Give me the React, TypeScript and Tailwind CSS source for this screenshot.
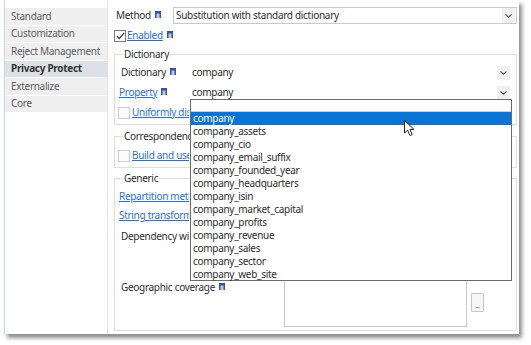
import React from "react";

const Info = () => (
  <svg width="6" height="7" viewBox="0 0 6 7" className="shrink-0 -mt-[3px]">
    <rect x="0" y="0" width="6" height="7" fill="#34559a" />
    <rect x="1.5" y="2.5" width="3" height="4.5" fill="#b9c8e6" />
  </svg>
);

const Chevron = () => (
  <svg width="7" height="4" viewBox="0 0 7 4">
    <path d="M0.5 0.5 L3.5 3.2 L6.5 0.5" fill="none" stroke="#555" strokeWidth="1.1" />
  </svg>
);

const Checkbox = ({ checked }: { checked?: boolean }) =>
  checked ? (
    <span className="flex h-[12px] w-[12px] shrink-0 items-center justify-center border border-[#7b7b7b] bg-white">
      <svg width="9" height="8" viewBox="0 0 9 8">
        <path d="M0.8 4 L3.3 6.5 L8.3 0.8" fill="none" stroke="#3a3a3a" strokeWidth="1.2" />
      </svg>
    </span>
  ) : (
    <span className="h-[12px] w-[12px] shrink-0 border border-[#cdcdcd] bg-[#fbfbfb]" />
  );

const Link = ({ children }: { children: React.ReactNode }) => (
  <span className="whitespace-nowrap text-[#2f6fc9] underline decoration-[#2f6fc9]">{children}</span>
);

const navItems = ["Standard", "Customization", "Reject Management", "Privacy Protect", "Externalize", "Core"];

const options = [
  "company",
  "company_assets",
  "company_cio",
  "company_email_suffix",
  "company_founded_year",
  "company_headquarters",
  "company_isin",
  "company_market_capital",
  "company_profits",
  "company_revenue",
  "company_sales",
  "company_sector",
  "company_web_site",
];

export default function App() {
  return (
    <div className="h-[345px] w-[531px] overflow-hidden bg-white pl-[4px] font-['Noto_Sans',sans-serif] text-[10px] leading-[13px] tracking-[-0.3px] text-[#2d2d2d]">
      <div className="relative flex h-[334px] w-[515px] bg-white shadow-[3px_4px_4px_rgba(0,0,0,0.45)]">
        {/* left navigation */}
        <aside className="flex w-[104px] flex-col border-l border-r border-l-[#c8d5e6] border-r-[#e2e2e2] pt-[8px]">
          {navItems.map((item) => (
            <div
              key={item}
              className={`flex h-[17.5px] items-center border-b border-white pl-[6px] ${
                item === "Privacy Protect"
                  ? "bg-[#dde1e6] font-bold text-[#333]"
                  : "bg-[#efefef] text-[#5e5e5e]"
              }`}
            >
              {item}
            </div>
          ))}
        </aside>

        {/* settings panel */}
        <main className="flex-1 pl-[6px] pr-[2px] pt-[7px]">
          <div className="flex h-[17px] items-center">
            <span className="ml-[2px] flex w-[57px] shrink-0 items-center gap-[4px]">
              Method <Info />
            </span>
            <div className="flex h-[17px] flex-1 items-center justify-between border border-[#c9c9c9] pl-[2px]">
              <span>Substitution with standard dictionary</span>
              <span className="mr-[1px] flex h-[15px] w-[13px] items-center justify-center bg-[#f0f0f0]">
                <Chevron />
              </span>
            </div>
          </div>

          <div className="mt-[5px] flex h-[13px] items-center gap-[1px]">
            <Checkbox checked />
            <span className="flex items-center gap-[4px]">
              <Link>Enabled</Link> <Info />
            </span>
          </div>

          <fieldset className="mt-[6px] border border-[#dedede] pb-[5px] pl-[5px] pr-[5px]">
            <legend className="ml-[3px] px-[1px]">Dictionary</legend>
            <div className="mt-[3px] flex h-[17px] items-center">
              <span className="ml-[1px] flex w-[71px] items-center gap-[4px]">
                Dictionary <Info />
              </span>
              <span className="flex-1">company</span>
              <span className="mr-[1px] flex h-[14px] w-[13px] items-center justify-center bg-[#f0f0f0]">
                <Chevron />
              </span>
            </div>
            <div className="mt-[3px] flex h-[17px] items-center">
              <span className="-ml-[1px] flex w-[73px] items-center gap-[4px]">
                <Link>Property</Link> <Info />
              </span>
              <span className="flex-1">company</span>
              <span className="mr-[1px] flex h-[14px] w-[13px] items-center justify-center bg-[#f0f0f0]">
                <Chevron />
              </span>
            </div>
            <div className="-ml-[2px] mt-[5px] flex h-[13px] w-[71px] items-center gap-[2px] overflow-hidden">
              <Checkbox />
              <Link>Uniformly distributed</Link>
            </div>
          </fieldset>

          <fieldset className="mt-[5px] border border-[#dedede] pb-[5px] pl-[5px] pr-[5px]">
            <legend className="ml-[3px] w-[67px] overflow-hidden whitespace-nowrap px-[1px]">
              Correspondence table
            </legend>
            <div className="-ml-[2px] mt-[6px] flex h-[13px] w-[71px] items-center gap-[2px] overflow-hidden">
              <Checkbox />
              <Link>Build and use correspondence</Link>
            </div>
          </fieldset>

          <fieldset className="mt-[4px] border border-[#dedede] pb-[3px] pl-[5px] pr-[5px]">
            <legend className="ml-[3px] px-[1px]">Generic</legend>
            <div className="-ml-[1px] mt-[5px] flex h-[13px] w-[70px] items-center overflow-hidden">
              <Link>Repartition method</Link>
            </div>
            <div className="-ml-[1px] mt-[6px] flex h-[13px] w-[70px] items-center overflow-hidden">
              <Link>String transformation</Link>
            </div>
            <div className="ml-[1px] mt-[8px] flex h-[13px] w-[68px] items-center overflow-hidden whitespace-nowrap">
              Dependency with
            </div>
            <div className="mt-[26px] flex items-start">
              <span className="ml-[1px] mt-[12px] flex w-[163px] items-center gap-[4px]">
                Geographic coverage <Info />
              </span>
              <div className="h-[58px] w-[183px] border border-[#c9c9c9]" />
              <button className="ml-[4px] mt-[24px] flex h-[19px] w-[13px] items-end justify-center rounded-[1px] border border-[#c6c6c6] bg-[#f6f6f6] pb-[2px] text-[7px] leading-[7px] text-[#666]">
                ...
              </button>
            </div>
          </fieldset>
        </main>

        {/* open dropdown list */}
        <div className="absolute left-[186px] top-[99px] h-[182px] w-[322px] border border-[#6a6a6a] bg-white">
          <div className="h-[12px] border-b border-[#d0d0d0]" />
          {options.map((o, i) => (
            <div
              key={o}
              className={`h-[13px] pl-[2px] leading-[13px] ${i === 0 ? "bg-[#0a74d4] text-white" : "text-[#2d2d2d]"}`}
            >
              {o}
            </div>
          ))}
        </div>

        {/* mouse pointer */}
        <svg width="12" height="18" viewBox="0 0 12 18" className="absolute left-[400px] top-[120px]">
          <path
            d="M0.5 0.5 L0.5 13 L3.6 10.2 L6 15.5 L8.2 14.5 L5.9 9.4 L10 9.4 Z"
            fill="white"
            stroke="#222"
            strokeWidth="1"
            strokeLinejoin="round"
          />
        </svg>
      </div>
    </div>
  );
}
